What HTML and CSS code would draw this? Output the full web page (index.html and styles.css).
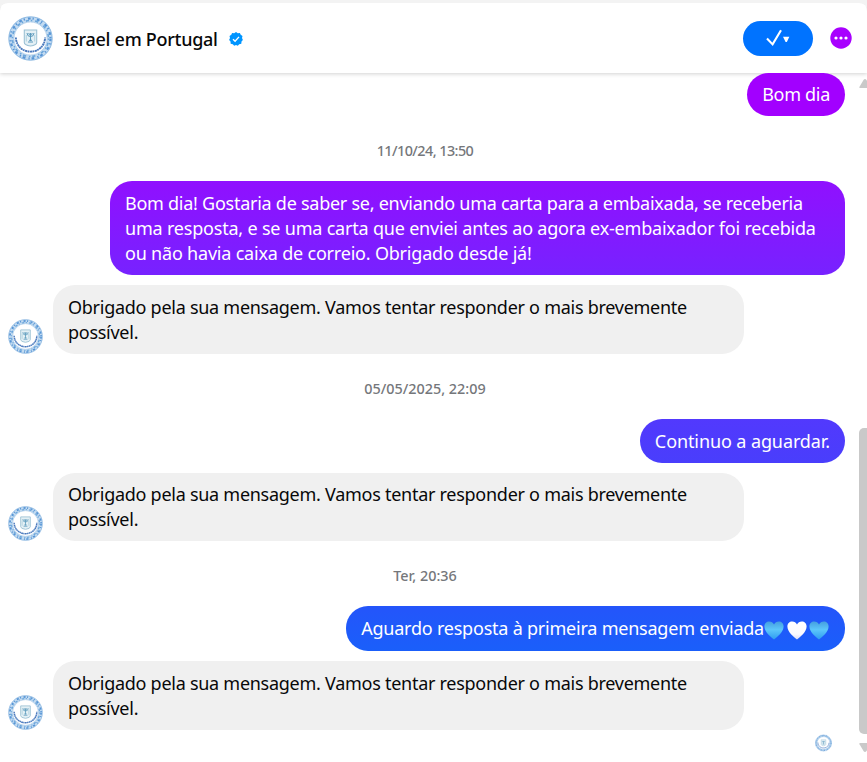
FILE: index.html
```html
<!DOCTYPE html>
<html lang="pt">
<head>
    <meta charset="UTF-8">
    <meta name="viewport" content="width=device-width, initial-scale=1.0">
    <title>Israel em Portugal</title>
    <link rel="stylesheet" href="styles.css">
</head>
<body>
    <svg class="defs" width="0" height="0">
        <defs>
            <linearGradient id="blue-heart" x1="0" y1="0" x2="0" y2="1">
                <stop offset="0" stop-color="#459fe0"/>
                <stop offset="0.45" stop-color="#5cc6fb"/>
                <stop offset="1" stop-color="#2e9cf0"/>
            </linearGradient>
            <linearGradient id="white-heart" x1="0" y1="0" x2="0" y2="1">
                <stop offset="0" stop-color="#ffffff"/>
                <stop offset="0.7" stop-color="#fbfaff"/>
                <stop offset="1" stop-color="#dcdcf2"/>
            </linearGradient>
        </defs>
        <symbol id="seal" viewBox="0 0 45 45">
            <circle cx="22.5" cy="22.5" r="22" fill="#fff"/>
            <circle cx="22.5" cy="22.5" r="19.2" fill="none" stroke="#c3dbf1" stroke-width="5.4"/>
            <circle cx="22.5" cy="22.5" r="21.7" fill="none" stroke="#7fb0dd" stroke-width=".8"/>
            <circle cx="22.5" cy="22.5" r="20" fill="none" stroke="#5795d6" stroke-width="2.2" stroke-dasharray="2.8 2 1.2 3.1"/>
            <circle cx="22.5" cy="22.5" r="18" fill="none" stroke="#6ba6da" stroke-width="1.6" stroke-dasharray="1.5 2.8 3.2 1.9"/>
            <circle cx="22.5" cy="22.5" r="16.5" fill="none" stroke="#9bc0e3" stroke-width=".6"/>
            <path d="M7.9 21.5 C8.6 40.3 36.4 40.3 37.1 21.5" fill="none" stroke="#4a79bd" stroke-width="1.9" stroke-dasharray="1.7 .5 2.3 .4"/>
            <path d="M16.3 14 H28.7 V26.6 Q28.7 29.2 22.5 30 Q16.3 29.2 16.3 26.6 Z" fill="#e4f0f5" stroke="#9cc1d4" stroke-width="1.1"/>
            <path d="M19 17 Q19.2 20.6 22.5 20.6 Q25.8 20.6 26 17 M20.8 17 Q21 19.2 22.5 19.2 Q24 19.2 24.2 17 M22.5 17 V25 M20 26 H25 M21 24.3 H24" fill="none" stroke="#5c9abc" stroke-width="1"/>
            <path d="M18.3 19 V25.5 M26.7 19 V25.5" stroke="#a4cbdc" stroke-width=".8"/>
        </symbol>
        <symbol id="heart" viewBox="0 0 20 19">
            <path d="M10 18.5 C7 16.2 .4 11.2 .4 5.6 C.4 2.6 2.5 .6 5.2 .6 C7.3 .6 9.1 1.7 10 3.4 C10.9 1.7 12.7 .6 14.8 .6 C17.5 .6 19.6 2.6 19.6 5.6 C19.6 11.2 13 16.2 10 18.5 Z"/>
        </symbol>
    </svg>

    <div class="chat">
        <header class="chat-header">
            <svg class="header-avatar"><use href="#seal"/></svg>
            <h1>Israel em Portugal</h1>
            <svg class="verified" viewBox="0 0 14 14">
                <path d="M7 0 L8.8 1.2 L10.9 .9 L11.7 2.8 L13.5 4 L13 6.1 L13.9 8 L12.5 9.6 L12.3 11.7 L10.2 12.2 L8.8 13.8 L7 13 L5.2 13.8 L3.8 12.2 L1.7 11.7 L1.5 9.6 L.1 8 L1 6.1 L.5 4 L2.3 2.8 L3.1 .9 L5.2 1.2 Z" fill="#0095ff"/>
                <path d="M4 7.2 L6.1 9.2 L10 4.9" fill="none" stroke="#fff" stroke-width="1.4"/>
            </svg>
            <button class="mark-done" aria-label="Concluir">
                <svg width="24" height="18" viewBox="0 0 24 18">
                    <path d="M1 9.6 L6.6 15.4 L15 1.2" fill="none" stroke="#fff" stroke-width="2.1"/>
                    <path d="M17 7.8 H23.4 L20.8 13 H19.6 Z" fill="#fff"/>
                </svg>
            </button>
            <button class="more" aria-label="Mais">
                <svg width="22" height="22" viewBox="0 0 22 22">
                    <circle cx="11" cy="11" r="10.7" fill="#a800ff"/>
                    <circle cx="6" cy="11" r="1.6" fill="#fff"/>
                    <circle cx="11" cy="11" r="1.6" fill="#fff"/>
                    <circle cx="16" cy="11" r="1.6" fill="#fff"/>
                </svg>
            </button>
        </header>

        <main class="messages">
            <div class="row sent"><p class="bubble purple">Bom dia</p></div>

            <time class="stamp narrow">11/10/24, 13:50</time>
            <div class="row sent">
                <p class="bubble violet"><span class="tight">Bom dia! Gostaria de saber se, enviando uma carta para a embaixada, se receberia</span><br>uma resposta, e se uma carta que enviei antes ao agora ex-embaixador foi recebida<br>ou não havia caixa de correio. Obrigado desde já!</p>
            </div>
            <div class="row received">
                <svg class="avatar"><use href="#seal"/></svg>
                <p class="bubble">Obrigado pela sua mensagem. Vamos tentar responder o mais brevemente<br>possível.</p>
            </div>

            <time class="stamp">05/05/2025, 22:09</time>
            <div class="row sent"><p class="bubble indigo">Continuo a aguardar.</p></div>
            <div class="row received">
                <svg class="avatar"><use href="#seal"/></svg>
                <p class="bubble">Obrigado pela sua mensagem. Vamos tentar responder o mais brevemente<br>possível.</p>
            </div>

            <time class="stamp">Ter, 20:36</time>
            <div class="row sent">
                <p class="bubble blue">Aguardo resposta à primeira mensagem enviada<span class="hearts"><svg fill="url(#blue-heart)"><use href="#heart"/></svg><svg fill="url(#white-heart)"><use href="#heart"/></svg><svg fill="url(#blue-heart)"><use href="#heart"/></svg></span></p>
            </div>
            <div class="row received">
                <svg class="avatar"><use href="#seal"/></svg>
                <p class="bubble">Obrigado pela sua mensagem. Vamos tentar responder o mais brevemente<br>possível.</p>
            </div>
            <div class="seen"><svg><use href="#seal"/></svg></div>
        </main>

        <div class="scrollbar">
            <svg class="arrow" viewBox="0 0 12 9"><path d="M.8 9 Q0 9 .5 7.8 L4.5 1 Q6 -.8 7.5 1 L11.5 7.8 Q12 9 11.2 9 Z"/></svg>
            <div class="thumb"></div>
            <svg class="arrow down" viewBox="0 0 12 9"><path d="M.8 9 Q0 9 .5 7.8 L4.5 1 Q6 -.8 7.5 1 L11.5 7.8 Q12 9 11.2 9 Z"/></svg>
        </div>
    </div>
</body>
</html>
```
FILE: styles.css
```css
* {
    box-sizing: border-box;
}
body {
    margin: 0;
    background: #f3f3f3;
    font-family: "Noto Sans", "Open Sans", sans-serif;
    overflow: hidden;
}
.defs {
    position: absolute;
}
.chat {
    display: grid;
    grid-template-columns: 858px 9px;
    grid-template-rows: 70px 689px;
    width: 867px;
    height: 759px;
    margin-top: 3px;
    background: #fff;
    border-radius: 8px 8px 0 0;
    overflow: hidden;
}
.chat-header {
    grid-column: 1 / 3;
    display: flex;
    align-items: center;
    padding: 0 15.5px 0 8px;
    background: #fff;
    box-shadow: 0 1px 4px rgba(0, 0, 0, 0.18);
    z-index: 1;
}
.header-avatar {
    width: 45px;
    height: 45px;
    margin-right: 11px;
}
h1 {
    margin: 2px 11px 0 0;
    font-size: 18px;
    font-weight: 500;
    letter-spacing: -0.28px;
    color: #080809;
}
.verified {
    width: 14px;
    height: 14px;
    margin-top: 1px;
}
button {
    display: flex;
    align-items: center;
    justify-content: center;
    padding: 0;
    border: none;
    background: none;
    cursor: pointer;
}
.mark-done {
    width: 70px;
    height: 35px;
    margin-left: auto;
    border-radius: 18px;
    background: #0073ff;
}
.more {
    margin-left: 16.5px;
}
.messages {
    display: flex;
    flex-direction: column;
    padding: 0 13px 0 8px;
    z-index: 2;
}
.row {
    display: flex;
    align-items: flex-end;
}
.sent {
    justify-content: flex-end;
}
.received {
    margin-top: 10px;
}
.bubble {
    margin: 0;
    padding: 9.5px 15px;
    border-radius: 22px;
    background: #f0f0f0;
    color: #080809;
    font-size: 18px;
    line-height: 25px;
    letter-spacing: -0.2px;
    white-space: nowrap;
}
.received .bubble {
    width: 691px;
    margin-left: 10px;
    padding-bottom: 9px;
    letter-spacing: -0.27px;
}
.sent .bubble {
    color: #fff;
}
.sent .purple {
    padding: 9px 15px;
    letter-spacing: -0.3px;
    background: #a200ff;
}
.sent .violet {
    width: 735px;
    background: linear-gradient(#9010ff, #7722ff);
}
.tight {
    letter-spacing: -0.26px;
}
.sent .indigo {
    padding-top: 10px;
    padding-bottom: 9px;
    letter-spacing: -0.1px;
    background: linear-gradient(#5239fd, #493efc);
}
.sent .blue {
    padding: 10px 15px;
    letter-spacing: -0.22px;
    background: linear-gradient(#2455fa, #1a5ffa);
}
.avatar {
    width: 35px;
    height: 35px;
}
.stamp {
    height: 65px;
    padding: 2px 3px 0 0;
    line-height: 65px;
    text-align: center;
    font-size: 14.4px;
    font-weight: 500;
    color: #75777b;
}
.narrow {
    letter-spacing: -0.56px;
}
.hearts {
    display: inline-flex;
    gap: 2.5px;
    margin-left: 0;
    margin-right: 1px;
    vertical-align: -5px;
}
.hearts svg {
    width: 20px;
    height: 19px;
}
.seen {
    display: flex;
    justify-content: flex-end;
    padding: 4.5px 13px 0 0;
}
.seen svg {
    width: 17px;
    height: 18px;
}
.scrollbar {
    display: flex;
    flex-direction: column;
    padding: 6px 0 10px 1px;
}
.arrow {
    flex: none;
    width: 12px;
    height: 9px;
    fill: #c9c9c9;
}
.down {
    transform: rotate(180deg);
    margin-top: 9px;
}
.thumb {
    width: 15px;
    height: 306px;
    margin-top: auto;
    border-radius: 5px;
    background: #c9c9c9;
}
```
